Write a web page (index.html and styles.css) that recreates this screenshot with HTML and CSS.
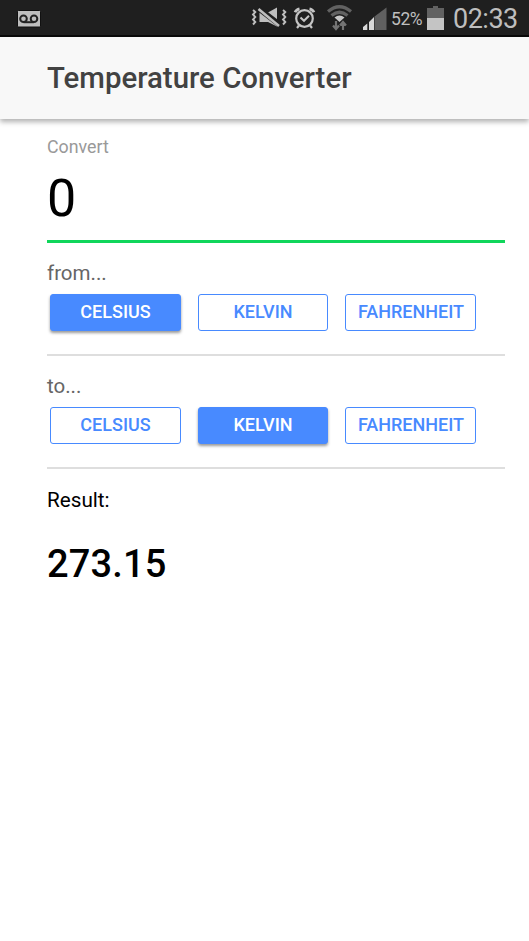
FILE: index.html
```html
<!DOCTYPE html>
<html lang="en">
<head>
<meta charset="utf-8">
<title>Temperature Converter</title>
<link rel="stylesheet" href="styles.css">
</head>
<body>
<div class="status">
  <svg class="voicemail" width="24" height="18" viewBox="0 0 24 18"><rect x="0.5" y="0.5" width="23" height="16.500" rx="1" fill="#bebebe" stroke="#111"/><g fill="none" stroke="#222" stroke-width="2"><circle cx="6.5" cy="8.8" r="3.3"/><circle cx="17" cy="8.8" r="3.3"/><path d="M6.500 12.200H17"/></g></svg>
  <svg class="system" width="138" height="36" viewBox="0 0 138 36">
    <g fill="none" stroke="#bebebe" stroke-width="1.9"><path d="M2 10l2.300 2-2.300 2.500 2.300 2.500-2.300 2.500 2.300 2.500-2.300 2.500M32 10l2.300 2-2.300 2.500 2.300 2.500-2.300 2.500 2.300 2.500-2.300 2.500"/></g>
    <path d="M8.500 12.500h8.500l9-5v19l-9-4.500H8.500z" fill="#bebebe"/>
    <path d="M7 8l22 17" stroke="#1f1f1f" stroke-width="5.500"/>
    <path d="M7.500 9l20.500 17" stroke="#bebebe" stroke-width="2.600"/>
    <g fill="none" stroke="#c4c4c4"><circle cx="53.500" cy="18.500" r="8.300" stroke-width="2.200"/><path d="M49.500 17.500l3.500 3.300 5-5" stroke-width="2"/><path d="M44 12.300a6 6 0 0 1 4.500-3.500M58.500 8.800a6 6 0 0 1 4.500 3.500" stroke-width="2.800"/><path d="M48 25.500l-2 2.500M59 25.500l2 2.500" stroke-width="2.200"/></g>
    <g fill="none" stroke="#626262" stroke-width="3.200"><path d="M77 11.500q11.500-9.500 23 0M80.500 15.500q8-6.500 16 0"/></g>
    <path d="M83.500 17.500q5-4 10 0l-5 4.500z" fill="#c6c6c6"/>
    <path d="M85 21v7.500M82 25.500l3 3.500 3-3.500M92 30v-7.500M89 25.500l3-3.500 3 3.500" fill="none" stroke="#747474" stroke-width="2.200"/>
    <path d="M112 30v-3l4.300-3.500v6.500zM118 30V22l5-5v13z" fill="#d8d8d8"/><path d="M123.500 30V16.500L135.500 7.500v22.500z" fill="#606060"/>
  </svg>
  <span class="percent">52%</span>
  <svg class="battery" width="17" height="24" viewBox="0 0 17 24"><path d="M0 2h6V0h5v2h6v10H0z" fill="#626262"/><path d="M0 12h17v12H0z" fill="#c4c4c4"/></svg>
  <span class="clock">02:33</span>
</div>
<header class="header"><h1>Temperature Converter</h1></header>
<main class="content">
  <div class="field">
    <div class="caption">Convert</div>
    <div class="value">0</div>
  </div>
  <section class="group">
    <div class="label">from...</div>
    <div class="buttons"><button class="btn celsius solid">CELSIUS</button><button class="btn kelvin">KELVIN</button><button class="btn fahrenheit">FAHRENHEIT</button></div>
  </section>
  <section class="group second">
    <div class="label">to...</div>
    <div class="buttons"><button class="btn celsius">CELSIUS</button><button class="btn kelvin solid">KELVIN</button><button class="btn fahrenheit">FAHRENHEIT</button></div>
  </section>
  <div class="result-label">Result:</div>
  <div class="result">273.15</div>
</main>
</body>
</html>
```
FILE: styles.css
```css
* { box-sizing: border-box; }
body { margin: 0; background: #fff; font-family: Roboto, sans-serif; color: #000; }
.status { height: 37px; background: #1f1f1f; border-bottom: 2px solid #090909; display: flex; align-items: flex-start; color: #bebebe; white-space: nowrap; position: relative; }
.voicemail { margin: 10px 0 0 17px; flex: none; }
.system { margin-left: 210px; flex: none; }
.percent { width: 38px; padding-left: 2px; margin-top: 8px; font-size: 17.500px; line-height: 22px; letter-spacing: -0.400px; }
.battery { margin-top: 6px; flex: none; }
.clock { margin: 4px 0 0 9px; font-size: 27px; line-height: 30px; letter-spacing: -0.500px; }
.header { height: 82px; background: #f8f8f8; padding: 0 47px; box-shadow: 0 3px 5px rgba(0,0,0,.3); }
h1 { margin: 0; font-size: 29.400px; line-height: 82px; font-weight: 500; color: #424242; white-space: nowrap; }
.content { padding: 17px 24px 0 47px; }
.field { height: 106.500px; border-bottom: 3px solid #10d65b; }
.caption { font-size: 17.800px; line-height: 22px; color: #999; }
.value { margin-top: 11px; font-size: 52px; line-height: 60px; }
.group { height: 113px; padding-top: 17px; border-bottom: 2px solid #dedede; }
.second { padding-top: 17px; }
.label { font-size: 20.500px; line-height: 26px; color: #666; }
.buttons { display: flex; gap: 17px; padding: 8px 0 0 3px; }
.btn { height: 37px; padding: 0 0 2px; border: 1px solid #488aff; border-radius: 3px; background: #fff; color: #488aff; font: 500 18px/33px Roboto, sans-serif; text-align: center; }
.celsius { width: 131px; }
.kelvin { width: 130px; }
.fahrenheit { width: 131px; padding-left: 1px; }
.solid { background: #488aff; color: #fff; box-shadow: 0 2px 3px rgba(0,0,0,.4); }
.result-label { margin-top: 18px; font-size: 20.700px; line-height: 26px; }
.result { margin-top: 29px; font-size: 38px; line-height: 44px; font-weight: 500; letter-spacing: .15px; }
```
